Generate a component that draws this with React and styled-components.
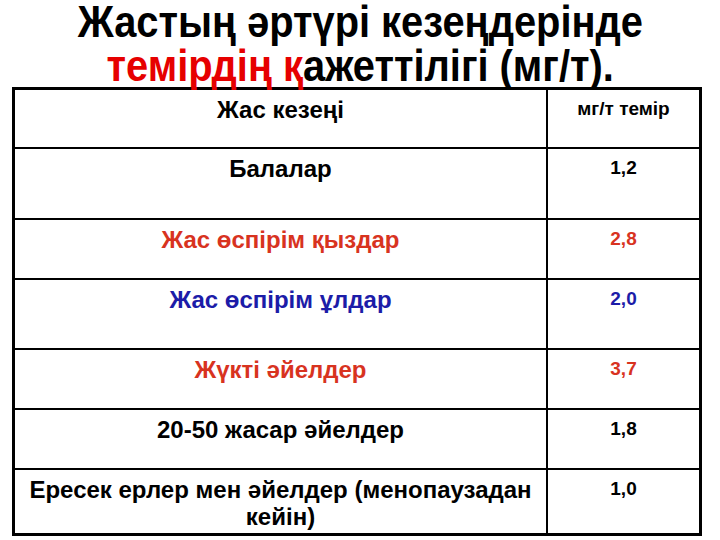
import React from "react";
import styled, { createGlobalStyle } from "styled-components";

const GlobalStyle = createGlobalStyle`
  html, body {
    margin: 0;
    padding: 0;
    background: #ffffff;
  }
  * {
    box-sizing: border-box;
  }
`;

const Slide = styled.div`
  width: 720px;
  height: 540px;
  background: #ffffff;
  font-family: "Liberation Sans", Arial, sans-serif;
  color: #000000;
  overflow: hidden;
`;

const Title = styled.h1`
  margin: 0;
  height: 87px;
  font-size: 44px;
  line-height: 44px;
  font-weight: 700;
  text-align: center;
  display: flex;
  flex-direction: column;
  align-items: center;
`;

// the slide title is set in a condensed face
const TitleLine = styled.span`
  display: block;
  white-space: nowrap;
  transform: scaleX(0.905);
`;

const Red = styled.span`
  color: #e60000;
`;

const Table = styled.div`
  margin-left: 12px;
  width: 690px;
  border: 3px solid #000000;
  display: grid;
  grid-template-columns: 533px 1fr;
`;

const Cell = styled.div`
  height: ${(p) => p.$h}px;
  border-bottom: ${(p) => (p.$last ? "none" : "2px solid #000")};
  border-right: ${(p) => (p.$left ? "2px solid #000" : "none")};
  padding: ${(p) => (p.$left ? "6px 12px 0" : "8px 4px 0")};
  text-align: center;
  font-weight: 700;
  font-size: ${(p) => (p.$left ? 24 : 19)}px;
  line-height: ${(p) => (p.$left ? 27 : 22)}px;
  color: ${(p) => p.$color || "#000"};
`;

const rows = [
  { label: "Жас кезеңі", value: "мг/т темір", h: 59 },
  { label: "Балалар", value: "1,2", h: 71 },
  { label: "Жас өспірім қыздар", value: "2,8", h: 60, color: "#d8331f" },
  { label: "Жас өспірім ұлдар", value: "2,0", h: 70, color: "#1c1ca8" },
  { label: "Жүкті әйелдер", value: "3,7", h: 60, color: "#d8331f" },
  { label: "20-50 жасар әйелдер", value: "1,8", h: 60 },
  { label: "Ересек ерлер мен әйелдер (менопаузадан кейін)", value: "1,0", h: 63, last: true },
];

export default function App() {
  return (
    <Slide>
      <GlobalStyle />
      <Title>
        <TitleLine>Жастың әртүрі кезеңдерінде</TitleLine>
        <TitleLine>
          <Red>темірдің қ</Red>ажеттілігі (мг/т).
        </TitleLine>
      </Title>
      <Table>
        {rows.map((r) => (
          <React.Fragment key={r.label}>
            <Cell $left $h={r.h} $last={r.last} $color={r.color}>
              {r.label}
            </Cell>
            <Cell $h={r.h} $last={r.last} $color={r.color}>
              {r.value}
            </Cell>
          </React.Fragment>
        ))}
      </Table>
    </Slide>
  );
}
